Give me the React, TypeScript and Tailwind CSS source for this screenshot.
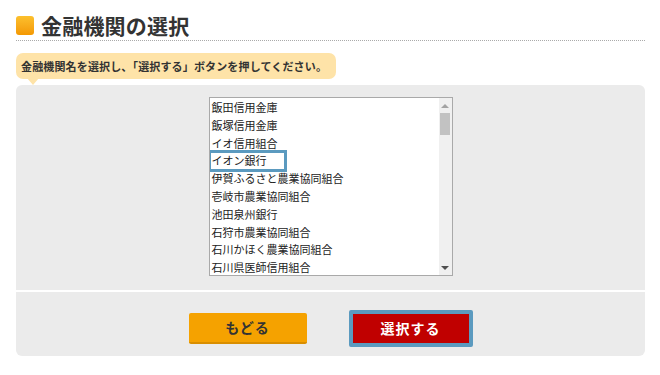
import { useState } from 'react'

const banks = [
  '飯田信用金庫',
  '飯塚信用金庫',
  'イオ信用組合',
  'イオン銀行',
  '伊賀ふるさと農業協同組合',
  '壱岐市農業協同組合',
  '池田泉州銀行',
  '石狩市農業協同組合',
  '石川かほく農業協同組合',
  '石川県医師信用組合',
]

export default function App() {
  const [selected, setSelected] = useState('イオン銀行')

  return (
    <div className="w-[660px] h-[375px] bg-white text-[#333] font-['Noto_Sans_CJK_JP','Noto_Sans',sans-serif]">
      <div className="pl-4 pr-[15px] pt-[12px]">
        {/* Title */}
        <h1 className="flex items-center gap-[7px] h-[26px]">
          <span className="w-[18px] h-[19px] rounded-[3px] bg-gradient-to-b from-[#fcc02c] to-[#f39800]" />
          <span className="text-[21px] leading-none font-bold text-[#333] tracking-[0.2px]">金融機関の選択</span>
        </h1>
        <div className="mt-[2px] border-b border-dotted border-[#aaa]" />

        {/* Hint bubble */}
        <div className="mt-[12px] relative inline-block rounded-[7px] bg-[#fee3a8] pl-[5px] pr-[9px] h-[26px] leading-[26px] text-[11px] font-bold text-[#333] tracking-[0.15px]">
          金融機関名を選択し、「選択する」ボタンを押してください。
          <span className="absolute left-[11px] top-[25px] w-0 h-0 border-l-[6px] border-r-[6px] border-t-[7px] border-l-transparent border-r-transparent border-t-[#fee3a8]" />
        </div>

        {/* Panel */}
        <div className="mt-[6px] rounded-[6px] bg-[#ebebeb]">
          <div className="flex justify-center pt-[12px] pb-[14px]">
            <div className="w-[244px] h-[179px] border border-[#a9a9a9] bg-white flex">
              <ul className="flex-1 pt-[1px] pl-[2px] overflow-hidden">
                {banks.map((b) => (
                  <li
                    key={b}
                    onClick={() => setSelected(b)}
                    className="relative h-[17.8px] leading-[17.8px] text-[11px] text-[#222] whitespace-nowrap cursor-default"
                  >
                    {b}
                    {selected === b && (
                      <span className="absolute -left-[4px] -top-[2px] w-[79px] h-[22px] border-[3px] border-[#5b9abf]" />
                    )}
                  </li>
                ))}
              </ul>
              {/* Scrollbar */}
              <div className="w-[13px] bg-[#f0f0f0] flex flex-col items-center">
                <div className="h-[15px] flex items-center justify-center">
                  <span className="w-0 h-0 border-l-[4px] border-r-[4px] border-b-[4px] border-l-transparent border-r-transparent border-b-[#a3a3a3]" />
                </div>
                <div className="w-[10px] h-[22px] bg-[#c2c2c2]" />
                <div className="flex-1" />
                <div className="h-[15px] flex items-center justify-center">
                  <span className="w-0 h-0 border-l-[4px] border-r-[4px] border-t-[4px] border-l-transparent border-r-transparent border-t-[#505050]" />
                </div>
              </div>
            </div>
          </div>

          <div className="h-[2px] bg-white" />

          <div className="flex justify-center items-center gap-[42px] pt-[18px] pb-[9px]">
            <button className="w-[118px] h-[31px] rounded-[2px] bg-[#f5a200] border-b-2 border-[#d98e00] text-[14px] font-bold text-[#333] tracking-[1px]">
              もどる
            </button>
            <button className="w-[124px] h-[37px] border-[4px] border-[#5b9abf] rounded-[2px] bg-[#c00000] text-[14px] font-bold text-white tracking-[1px]">
              選択する
            </button>
          </div>
        </div>
      </div>
    </div>
  )
}
